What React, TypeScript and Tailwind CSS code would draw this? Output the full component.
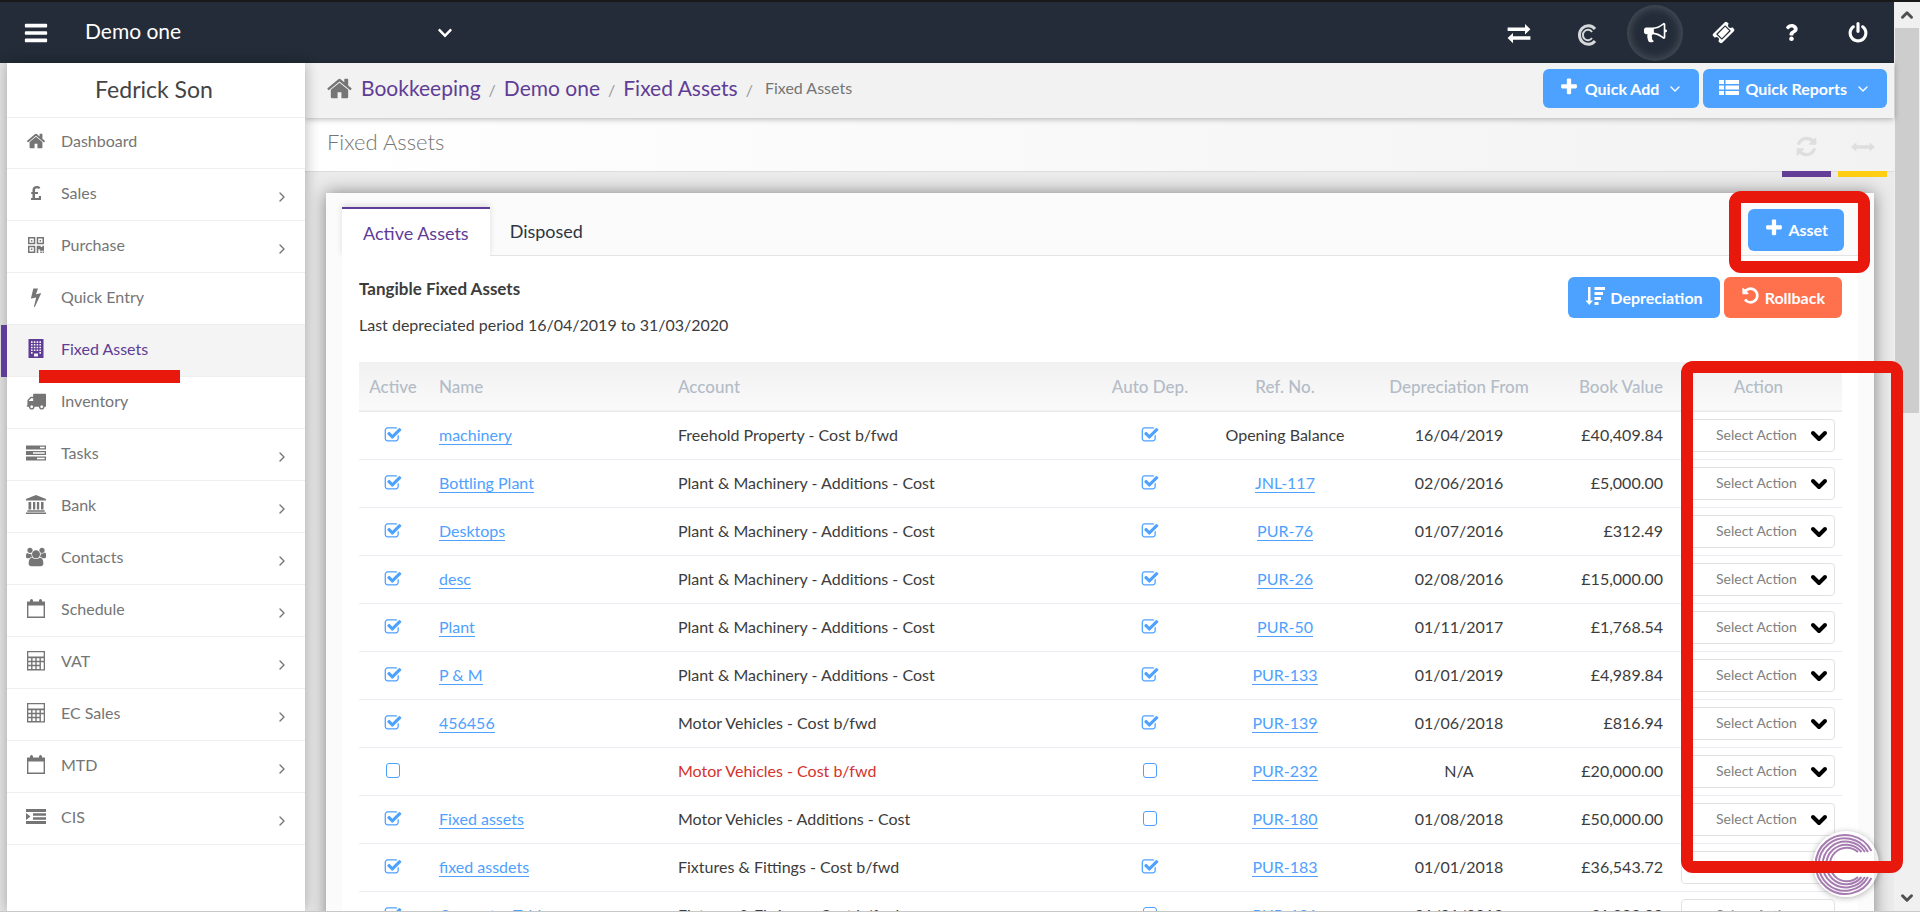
import { FaChevronDown, FaPoundSign, FaQuestion } from "react-icons/fa";
import { ChevronDown, ChevronRight, ChevronUp } from "lucide-react";

const paths = {
  bars: "M1664 1344v128q0 26-19 45t-45 19h-1408q-26 0-45-19t-19-45v-128q0-26 19-45t45-19h1408q26 0 45 19t19 45zm0-512v128q0 26-19 45t-45 19h-1408q-26 0-45-19t-19-45v-128q0-26 19-45t45-19h1408q26 0 45 19t19 45zm0-512v128q0 26-19 45t-45 19h-1408q-26 0-45-19t-19-45v-128q0-26 19-45t45-19h1408q26 0 45 19t19 45z",
  home: "M1472 992v480q0 26-19 45t-45 19h-384v-384h-256v384h-384q-26 0-45-19t-19-45v-480q0-1 .5-3t.5-3l575-474 575 474q1 2 1 6zm223-69l-62 74q-8 9-21 11h-3q-13 0-21-7l-692-577-692 577q-12 8-24 7-13-2-21-11l-62-74q-8-10-7-23.5t11-21.5l719-599q32-26 76-26t76 26l244 204v-195q0-14 9-23t23-9h192q14 0 23 9t9 23v408l219 182q10 8 11 21.5t-7 23.5z",
  plus: "M1600 736v192q0 40-28 68t-68 28h-416v416q0 40-28 68t-68 28h-192q-40 0-68-28t-28-68v-416h-416q-40 0-68-28t-28-68v-192q0-40 28-68t68-28h416v-416q0-40 28-68t68-28h192q40 0 68 28t28 68v416h416q40 0 68 28t28 68z",
  bolt: "M1333 566q18 20 7 44l-540 1157q-13 25-42 25-4 0-14-2-17-5-25.5-19t-4.5-30l197-808-406 101q-4 1-12 1-18 0-31-11-18-15-13-39l201-825q4-14 16-23t28-9h328q19 0 32 12.5t13 29.5q0 8-5 18l-171 463 396-98q8-2 12-2 19 0 34 15z",
  check:
    "M1472 930v318q0 119-84.5 203.5t-203.5 84.5h-832q-119 0-203.5-84.5t-84.5-203.5v-832q0-119 84.5-203.5t203.5-84.5h832q63 0 117 25 15 7 18 23 3 17-9 29l-49 49q-10 10-23 10-3 0-9-2-23-6-45-6h-832q-66 0-113 47t-47 113v832q0 66 47 113t113 47h832q66 0 113-47t47-113v-254q0-13 9-22l64-64q10-10 23-10 6 0 12 3 20 8 20 29zm231-489l-814 814q-24 24-57 24t-57-24l-430-430q-24-24-24-57t24-57l110-110q24-24 57-24t57 24l263 263 647-647q24-24 57-24t57 24l110 110q24 24 24 57t-24 57z",
  bullhorn:
    "M1664 640q53 0 90.5 37.5t37.5 90.5-37.5 90.5-90.5 37.5v384q0 52-38 90t-90 38q-417-347-812-380-58 19-91 66t-31 100.5 40 92.5q-20 33-23 65.5t6 58 33.5 55 48 50 61.5 50.5q-29 58-111.5 83t-168.5 11.5-132-55.5q-7-23-29.5-87.5t-32-94.5-23-89-15-101 3.5-98.5 22-110.5h-122q-66 0-113-47t-47-113v-192q0-66 47-113t113-47h480q435 0 896-384 52 0 90 38t38 90v384zm-128 604v-954q-394 302-768 343v270q377 42 768 341z",
  refresh:
    "M1639 1056q0 5-1 7-64 268-268 434.5t-478 166.5q-146 0-282.5-55t-243.5-157l-129 129q-19 19-45 19t-45-19-19-45v-448q0-26 19-45t45-19h448q26 0 45 19t19 45-19 45l-137 137q71 66 161 102t187 36q134 0 250-65t186-179q11-17 53-117 8-23 30-23h192q13 0 22.5 9.5t9.5 22.5zm25-800v448q0 26-19 45t-45 19h-448q-26 0-45-19t-19-45 19-45l138-138q-148-137-349-137-134 0-250 65t-186 179q-11 17-53 117-8 23-30 23h-199q-13 0-22.5-9.5t-9.5-22.5v-7q65-268 270-434.5t480-166.5q146 0 284 55.5t245 156.5l130-129q19-19 45-19t45 19 19 45z",
  power:
    "M1664 896q0 156-61 298t-164 245-245 164-298 61-298-61-245-164-164-245-61-298q0-182 80.5-343t226.5-270q43-32 95.5-25t83.5 50q32 42 24.5 94.5t-49.5 84.5q-98 74-151.5 181t-53.5 228q0 104 40.5 198.5t109.5 163.5 163.5 109.5 198.5 40.5 198.5-40.5 163.5-109.5 109.5-163.5 40.5-198.5q0-121-53.5-228t-151.5-181q-42-32-49.5-84.5t24.5-94.5q31-43 84-50t95 25q146 109 226.5 270t80.5 343zm-640-768v640q0 52-38 90t-90 38-90-38-38-90v-640q0-52 38-90t90-38 90 38 38 90z",
  undo: "M1664 896q0 156-61 298t-164 245-245 164-298 61q-172 0-327-72.5t-264-204.5q-7-10-6.5-22.5t8.5-20.5l137-138q10-9 25-9 16 2 23 12 73 95 179 147t225 52q104 0 198.5-40.5t163.5-109.5 109.5-163.5 40.5-198.5-40.5-198.5-109.5-163.5-163.5-109.5-198.5-40.5q-98 0-188 35.5t-160 101.5l137 138q31 30 14 69-17 40-59 40h-448q-26 0-45-19t-19-45v-448q0-42 40-59 39-17 69 14l130 129q107-101 244.5-156.5t284.5-55.5q156 0 298 61t245 164 164 245 61 298z",
  users:
    "M529 896q-162 5-265 128h-134q-82 0-138-40.5t-56-118.5q0-353 124-353 6 0 43.5 21t97.5 42.5 119 21.5q67 0 133-23-5 37-5 66 0 159 97 294zm1071 637q0 120-73 189.5t-194 69.5h-874q-121 0-194-69.5t-73-189.5q0-53 3.5-103.5t14-109 26.5-108.5 43-97.5 62-81 85.5-53.5 111.5-20q10 0 43 21.5t73 48 107 48 135 21.5 135-21.5 107-48 73-48 43-21.5q61 0 111.5 20t85.5 53.5 62 81 43 97.5 26.5 108.5 14 109 3.5 103.5zm-1024-1277q0 106-75 181t-181 75-181-75-75-181 75-181 181-75 181 75 75 181zm704 384q0 159-112.5 271.5t-271.5 112.5-271.5-112.5-112.5-271.5 112.5-271.5 271.5-112.5 271.5 112.5 112.5 271.5zm576 225q0 78-56 118.5t-138 40.5h-134q-103-123-265-128 97-135 97-294 0-29-5-66 66 23 133 23 59 0 119-21.5t97.5-42.5 43.5-21q124 0 124 353zm-128-609q0 106-75 181t-181 75-181-75-75-181 75-181 181-75 181 75 75 181z",
  truck:
    "M640 1408q0-52-38-90t-90-38-90 38-38 90 38 90 90 38 90-38 38-90zm-384-512h384v-256h-158q-13 0-22 9l-195 195q-9 9-9 22v30zm1280 512q0-52-38-90t-90-38-90 38-38 90 38 90 90 38 90-38 38-90zm256-1088v1024q0 15-4 26.5t-13.5 18.5-16.5 11.5-23.5 6-22.5 2-25.5 0-22.5-.5q0 106-75 181t-181 75-181-75-75-181h-384q0 106-75 181t-181 75-181-75-75-181h-64q-3 0-22.5.5t-25.5 0-22.5-2-23.5-6-16.5-11.5-13.5-18.5-4-26.5q0-26 19-45t45-19v-320q0-8-.5-35t0-38 2.5-34.5 6.5-37 14-30.5 22.5-30l198-198q19-19 50.5-32t58.5-13h160v-192q0-26 19-45t45-19h1024q26 0 45 19t19 45z",
  ticket:
    "M1024 452l316 316-572 572-316-316zm-211 979l618-618q19-19 19-45t-19-45l-362-362q-18-18-45-18t-45 18l-618 618q-19 19-19 45t19 45l362 362q18 18 45 18t45-18zm889-637l-907 908q-37 37-90.5 37t-90.5-37l-126-126q56-56 56-136t-56-136-136-56-136 56l-125-126q-37-37-37-90.5t37-90.5l907-906q37-37 90.5-37t90.5 37l125 125q-56 56-56 136t56 136 136 56 136-56l126 125q37 37 37 90.5t-37 90.5z",
};

function Glyph({ name, className }: { name: keyof typeof paths; className?: string }) {
  return (
    <svg
      viewBox={name === "users" ? "-64 0 1920 1792" : "0 0 1792 1792"}
      fill="currentColor"
      className={className}
      aria-hidden="true"
    >
      <path d={paths[name]} />
    </svg>
  );
}

// Icons on a 20px grid, mostly plain bars and boxes
function Shape({ d, className = "size-5" }: { d: string; className?: string }) {
  return (
    <svg viewBox="0 0 20 20" fill="currentColor" fillRule="evenodd" className={className} aria-hidden="true">
      <path d={d} />
    </svg>
  );
}

const shapes = {
  qrcode:
    "M2 2h7.300v7.300H2zM3.500 3.500v4.300h4.300V3.500zM4.900 4.900h1.500v1.500H4.900zM10.700 2H18v7.300h-7.300zM12.200 3.500v4.300h4.300V3.500zM13.600 4.900h1.500v1.500h-1.500zM2 10.700h7.300V18H2zM3.500 12.200v4.300h4.300v-4.300zM4.900 13.600h1.500v1.500H4.900zM10.700 10.700h4V12h1.600v-1.300H18v5h-4.200v-1.500h-1.500V18h-1.600zM14.300 16.500h1.500V18h-1.500zM16.600 16.500H18V18h-1.400z",
  building:
    "M2.500 0h15v19h-15zM5 2.300v1.600h1.600V2.300zM7.800 2.300v1.600h1.600V2.300zM10.600 2.300v1.600h1.600V2.300zM13.400 2.300v1.600H15V2.300zM5 5v1.600h1.600V5zM7.800 5v1.600h1.600V5zM10.600 5v1.600h1.600V5zM13.400 5v1.600H15V5zM5 7.700v1.600h1.600V7.700zM7.800 7.700v1.600h1.600V7.700zM10.600 7.700v1.600h1.600V7.700zM13.400 7.700v1.600H15V7.700zM5 10.400V12h1.600v-1.600zM7.800 10.400V12h1.600v-1.600zM10.600 10.400V12h1.600v-1.600zM13.400 10.400V12H15v-1.600zM5 13.100v1.600h1.600v-1.600zM13.400 13.100v1.600H15v-1.600zM8 14.500v3h4v-3z",
  tasks:
    "M0 2.500h20v4H0zM14 3.800v1.400h4.700V3.800zM0 8h20v4H0zM7 9.300v1.400h11.700V9.300zM0 13.500h20v4H0zM11 14.800v1.400h7.700v-1.400z",
  bank: "M10 0l10 4v1.500H0V4zM2.500 7h2.700v7.500H2.500zM7 7h2.300v7.500H7zM10.900 7h2.300v7.500h-2.300zM15 7h2.500v7.500H15zM1.300 15.200h17.400v1.500H1.300zM0 17.500h20V19H0z",
  calendar:
    "M1 2.500h3V1.500a1.500 1.500 0 0 1 3 0v1h6V1.500a1.500 1.500 0 0 1 3 0v1h3V19H1zM2.400 6.500v11.100h15.200V6.500z",
  calculator:
    "M1 0h18v19.500H1zM2.300 1.300v4.200h15.400V1.300zM2.300 7.300v2.500h2.800V7.300zM6.500 7.300v2.500h2.800V7.300zM10.700 7.300v2.500h2.800V7.300zM14.900 7.300v2.500h2.800V7.300zM2.300 11.200v2.500h2.800v-2.500zM6.500 11.200v2.500h2.800v-2.500zM10.700 11.200v2.500h2.800v-2.500zM14.900 11.200v7h2.800v-7zM2.300 15.200v2.800h2.800v-2.800zM6.500 15.200v2.800h2.800v-2.800zM10.700 15.200v2.800h2.800v-2.800z",
  indent: "M0 2h20v3H0zM7 6.200h13v2.600H7zM7 10.200h13v2.600H7zM0 14h20v3H0zM0 6l4.500 3.500L0 13z",
  exchange:
    "M.5 5.500h14.500V2.500l4.500 4.400-4.500 4.400V8.300H.5zM19.500 12.800H5V10L.5 14.200 5 18.500v-2.900h14.500z",
  arrowsH: "M0 10l4.500-4v2.500h11V6L20 10l-4.500 4v-2.500h-11V14z",
  list: "M0 3h5v4H0zM6.500 3H20v4H6.500zM0 8.500h5v4H0zM6.500 8.500H20v4H6.500zM0 14h5v4H0zM6.500 14H20v4H6.500z",
  sortDesc:
    "M3 1h2.500v13.500H8L4.200 19 .5 14.500H3zM9.500 1H20v3H9.500zM9.500 6H18v3H9.500zM9.500 11H16v3H9.500zM9.500 16h4v3h-4z",
};

const menu = [
  { label: "Dashboard", icon: <Glyph name="home" className="size-5" /> },
  { label: "Sales", icon: <FaPoundSign className="size-4" />, more: true },
  { label: "Purchase", icon: <Shape d={shapes.qrcode} />, more: true },
  { label: "Quick Entry", icon: <Glyph name="bolt" className="size-5" /> },
  { label: "Fixed Assets", icon: <Shape d={shapes.building} />, active: true },
  { label: "Inventory", icon: <Glyph name="truck" className="size-5" /> },
  { label: "Tasks", icon: <Shape d={shapes.tasks} />, more: true },
  { label: "Bank", icon: <Shape d={shapes.bank} />, more: true },
  { label: "Contacts", icon: <Glyph name="users" className="size-5" />, more: true },
  { label: "Schedule", icon: <Shape d={shapes.calendar} />, more: true },
  { label: "VAT", icon: <Shape d={shapes.calculator} />, more: true },
  { label: "EC Sales", icon: <Shape d={shapes.calculator} />, more: true },
  { label: "MTD", icon: <Shape d={shapes.calendar} />, more: true },
  { label: "CIS", icon: <Shape d={shapes.indent} />, more: true },
];

const crumbs = ["Bookkeeping", "Demo one", "Fixed Assets"];

const additions = "Plant & Machinery - Additions - Cost";

const assets = [
  { active: true, name: "machinery", account: "Freehold Property - Cost b/fwd", auto: true, ref: "", from: "16/04/2019", value: "£40,409.84" },
  { active: true, name: "Bottling Plant", account: additions, auto: true, ref: "JNL-117", from: "02/06/2016", value: "£5,000.00" },
  { active: true, name: "Desktops", account: additions, auto: true, ref: "PUR-76", from: "01/07/2016", value: "£312.49" },
  { active: true, name: "desc", account: additions, auto: true, ref: "PUR-26", from: "02/08/2016", value: "£15,000.00" },
  { active: true, name: "Plant", account: additions, auto: true, ref: "PUR-50", from: "01/11/2017", value: "£1,768.54" },
  { active: true, name: "P & M", account: additions, auto: true, ref: "PUR-133", from: "01/01/2019", value: "£4,989.84" },
  { active: true, name: "456456", account: "Motor Vehicles - Cost b/fwd", auto: true, ref: "PUR-139", from: "01/06/2018", value: "£816.94" },
  { active: false, name: "", account: "Motor Vehicles - Cost b/fwd", auto: false, ref: "PUR-232", from: "N/A", value: "£20,000.00" },
  { active: true, name: "Fixed assets", account: "Motor Vehicles - Additions - Cost", auto: false, ref: "PUR-180", from: "01/08/2018", value: "£50,000.00" },
  { active: true, name: "fixed assdets", account: "Fixtures & Fittings - Cost b/fwd", auto: true, ref: "PUR-183", from: "01/01/2018", value: "£36,543.72" },
  { active: true, name: "Computer Table", account: "Fixtures & Fittings - Cost b/fwd", auto: false, ref: "PUR-181", from: "01/01/2018", value: "£1,200.00" },
];

function Check({ label, checked }: { label: string; checked: boolean }) {
  return (
    <label className="relative inline-flex size-[18px] align-middle text-[#4da1ff]">
      <input type="checkbox" defaultChecked={checked} aria-label={label} className="peer size-full appearance-none" />
      <Glyph name="check" className="pointer-events-none absolute inset-0 hidden peer-checked:block" />
      <span className="pointer-events-none absolute inset-x-[2px] top-px h-[15px] rounded-[3px] border border-current peer-checked:hidden" />
    </label>
  );
}

function Topbar() {
  return (
    <header className="flex items-center h-[63px] shrink-0 border-t-2 border-[#191919] bg-[#232c38] pl-[23px] pr-[25px] text-white">
      <button aria-label="Menu">
        <Glyph name="bars" className="size-[26px]" />
      </button>
      <button className="flex items-center justify-between w-[368px] ml-9 pb-1 text-[21px]">
        Demo one
        <FaChevronDown className="size-4 mt-1" />
      </button>
      <nav className="flex items-center ml-auto">
        <button className="flex justify-center w-[68px]" aria-label="Switch">
          <Shape d={shapes.exchange} className="size-6" />
        </button>
        <button className="flex justify-center w-[68px] pt-1" aria-label="Capium">
          <svg viewBox="0 0 20 22" className="w-5 h-[22px]" fill="none" stroke="#d5d7da">
            <path d="M18 5A8.800 9.300 0 1 0 18 17" strokeWidth="3" />
            <path d="M15 8A5 5.200 0 1 0 15 14" strokeWidth="2" />
          </svg>
        </button>
        <button
          className="flex items-center justify-center size-14 mx-[6px] rounded-full shadow-[inset_0_0_10px_2px_rgba(255,255,255,0.18)]"
          aria-label="Announcements"
        >
          <Glyph name="bullhorn" className="size-[23px]" />
        </button>
        <button className="flex justify-center w-[68px]" aria-label="Tickets">
          <Glyph name="ticket" className="size-[23px]" />
        </button>
        <button className="flex justify-center w-[68px]" aria-label="Help">
          <FaQuestion className="size-[17px]" />
        </button>
        <button className="flex justify-end w-[44px]" aria-label="Log out">
          <Glyph name="power" className="size-[22px]" />
        </button>
      </nav>
    </header>
  );
}

function Sidebar() {
  return (
    <aside className="relative z-10 w-[298px] ml-[7px] shrink-0 bg-white shadow-[0_0_14px_rgba(0,0,0,0.3)]">
      <h2 className="h-[55px] pt-2 pr-1 text-center text-[23px] leading-9 text-[#444] border-b border-[#eee]">Fedrick Son</h2>
      <ul className="-mt-px">
        {menu.map((item) => (
          <li key={item.label} className="relative">
            {item.active && <span className="absolute -left-[6px] inset-y-0 w-[6px] bg-[#5f3d96]" />}
            <a
              href="#"
              className={
                "flex items-center h-[52px] pl-[19px] pr-[15px] pb-1 border-b border-[#eee] " +
                (item.active ? "bg-[#f4f4f4] text-[#5f3d96]" : "text-[#757575]")
              }
            >
              <span className="flex justify-center w-5 mr-[15px]">{item.icon}</span>
              {item.label}
              {item.more && <ChevronRight className="size-4 ml-auto mt-2" />}
            </a>
            {item.active && <span className="absolute left-8 -bottom-[6px] z-10 w-[141px] h-[13px] bg-[#e8180c]" />}
          </li>
        ))}
      </ul>
    </aside>
  );
}

function AssetTable() {
  return (
    <table className="w-full table-fixed text-[#3c3c3c]">
      <thead>
        <tr className="h-[49px] bg-gradient-to-b from-[#f1f1f1] to-[#fafafa] border-b border-[#eaeaea] text-[17px] text-[#b3bcc7]">
          <th className="w-[68px] font-medium">Active</th>
          <th className="w-[239px] px-3 font-medium text-left">Name</th>
          <th className="px-3 font-medium text-left">Account</th>
          <th className="w-[106px] font-medium">Auto Dep.</th>
          <th className="w-[164px] font-medium">Ref. No.</th>
          <th className="w-[184px] font-medium">Depreciation From</th>
          <th className="w-[124px] px-3 font-medium text-right">Book Value</th>
          <th className="w-[167px] font-medium">Action</th>
        </tr>
      </thead>
      <tbody>
        {assets.map((a, index) => (
          <tr key={index} className="h-12 border-b border-[#e9edf2]">
            <td className="text-center pb-1">
              <Check label={"Active " + a.name} checked={a.active} />
            </td>
            <td className="px-3">
              <a href="#" className="border-b border-current text-[#4da1ff]">
                {a.name}
              </a>
            </td>
            <td className={a.name ? "px-3" : "px-3 text-[#d4322c]"}>{a.account}</td>
            <td className="text-center pb-1">
              <Check label={"Auto depreciation " + a.name} checked={a.auto} />
            </td>
            <td className="text-center">
              {a.ref ? (
                <a href="#" className="border-b border-current text-[#4da1ff]">
                  {a.ref}
                </a>
              ) : (
                "Opening Balance"
              )}
            </td>
            <td className="text-center">{a.from}</td>
            <td className="px-3 text-right">{a.value}</td>
            <td className="pl-[6px] pr-[7px]">
              <div className="relative">
                <select
                  aria-label={"Action for " + a.name}
                  className="block w-full h-[33px] pl-[34px] appearance-none rounded border border-[#e2e2e2] bg-white text-sm text-[#808080]"
                >
                  <option>Select Action</option>
                </select>
                <ChevronDown className="pointer-events-none absolute right-[4px] top-[5px] size-6 text-black" strokeWidth={4} />
              </div>
            </td>
          </tr>
        ))}
      </tbody>
    </table>
  );
}

function ChatBadge() {
  return (
    <button
      aria-label="Chat"
      className="absolute right-[15px] bottom-[14px] flex items-center justify-center size-[66px] rounded-full bg-white/70 shadow-[0_1px_6px_rgba(0,0,0,0.3)]"
    >
      <svg viewBox="0 0 66 66" className="size-full" fill="none" stroke="#a67bb0" strokeWidth="2">
        <path d="M58.400 20A29.500 29.500 0 1 0 58.400 47" />
        <path d="M55 21A26.200 26.200 0 1 0 55 46" />
        <path d="M52 21A23 23 0 1 0 52 46" />
        <path d="M48.500 21A19.800 19.800 0 1 0 48.500 46" />
        <path d="M45 21A16.800 16.800 0 1 0 45 46" />
      </svg>
    </button>
  );
}

function Scrollbar() {
  return (
    <div className="flex flex-col items-center w-[26px] shrink-0 border-t-2 border-[#191919] bg-[#f0f0f0] text-[#505050]">
      <ChevronUp className="size-[18px] my-1" strokeWidth={4} />
      <div className="w-6 h-[385px] bg-[#cdcdcd]" />
      <ChevronDown className="size-[18px] mt-auto mb-1" strokeWidth={4} />
    </div>
  );
}

const button = "flex items-center rounded-md font-bold text-white";

export default function App() {
  return (
    <div className="relative flex h-screen overflow-hidden border-b border-[#c8c8c8] bg-[#e6e6e6] font-[Lato,sans-serif] text-base">
      <div className="relative flex flex-col flex-1 min-w-0">
        <Topbar />
        <div className="flex flex-1 min-h-0">
          <Sidebar />
          <main className="flex flex-col flex-1 min-w-0 bg-[#ebebeb]">
            <div className="relative flex items-center h-[55px] shrink-0 pl-[22px] pr-[7px] pb-1 bg-[#f2f2f2] shadow-[0_1px_6px_rgba(0,0,0,0.3)]">
              <Glyph name="home" className="size-[27px] mr-2 -ml-px text-[#757575]" />
              <nav className="flex items-center pb-[2px] text-[21px] text-[#5f3d96]">
                {crumbs.map((c) => (
                  <span key={c}>
                    <a href="#">{c}</a>
                    <span className="mx-2 text-base text-[#999]">/</span>
                  </span>
                ))}
                <span className="ml-1 text-base text-[#757575]">Fixed Assets</span>
              </nav>
              <div className="flex gap-1 ml-auto">
                <button className={button + " h-[39px] px-4 bg-[#4da1ff]"}>
                  <Glyph name="plus" className="size-5 mr-[6px] mb-1" />
                  Quick Add
                  <ChevronDown className="size-4 ml-2" />
                </button>
                <button className={button + " h-[39px] px-4 bg-[#4da1ff]"}>
                  <Shape d={shapes.list} className="size-5 mr-[6px] mb-1" />
                  Quick Reports
                  <ChevronDown className="size-4 ml-2" />
                </button>
              </div>
            </div>
            <div className="flex justify-between h-[54px] shrink-0 pl-[22px] pr-[7px] border-b border-[#ddd] bg-gradient-to-r from-white to-[#f2f2f2]">
              <h1 className="pt-2 text-[22px] leading-8 font-light text-[#757575]">Fixed Assets</h1>
              <div className="flex gap-[7px] text-[#dedede]">
                <button aria-label="Refresh" className="flex items-center justify-center w-[49px] h-[59px] pt-1 border-b-6 border-[#643f97]">
                  <Glyph name="refresh" className="size-[23px]" />
                </button>
                <button aria-label="Expand" className="flex items-center justify-center w-[49px] h-[59px] pt-1 border-b-6 border-[#ffcd12]">
                  <Shape d={shapes.arrowsH} className="size-6" />
                </button>
              </div>
            </div>
            <section className="flex flex-col flex-1 mt-[21px] ml-[21px] mr-5 px-4 pt-[14px] bg-[#fbfbfb] shadow-[0_0_16px_rgba(0,0,0,0.45)]">
              <div className="flex border-b border-[#e4e4e4]">
                <button className="h-[49px] -mb-px px-[21px] border-t-2 border-[#5f3d96] bg-white text-lg text-[#5f3d96] shadow-[0_-2px_6px_rgba(0,0,0,0.12)]">
                  Active Assets
                </button>
                <button className="px-5 text-lg text-[#2c3641]">Disposed</button>
                <button className={button + " h-[42px] mt-[2px] mr-[14px] ml-auto px-4 bg-[#4da1ff]"}>
                  <Glyph name="plus" className="size-5 mr-1 mb-1" />
                  Asset
                </button>
              </div>
              <div className="flex-1 bg-white pl-[17px] pr-4">
                <div className="flex justify-between h-[106px] pt-[21px]">
                  <div className="leading-6 text-[#3c3c3c]">
                    <h3 className="font-bold text-[17px]">Tangible Fixed Assets</h3>
                    <p className="mt-3">Last depreciated period 16/04/2019 to 31/03/2020</p>
                  </div>
                  <div className="flex items-start gap-1">
                    <button className={button + " h-[41px] px-[17px] bg-[#4da1ff]"}>
                      <Shape d={shapes.sortDesc} className="size-5 mr-[5px] mb-1" />
                      Depreciation
                    </button>
                    <button className={button + " h-[41px] px-[17px] bg-[#ff704d]"}>
                      <Glyph name="undo" className="size-[19px] mr-[5px] mb-1" />
                      Rollback
                    </button>
                  </div>
                </div>
                <AssetTable />
              </div>
            </section>
          </main>
        </div>
        <ChatBadge />
      </div>
      <Scrollbar />
      {/* callouts */}
      <div className="pointer-events-none absolute top-[191px] right-[50px] w-[141px] h-[82px] rounded-xl border-12 border-[#e8180c]" />
      <div className="pointer-events-none absolute top-[361px] right-[17px] w-[222px] h-[512px] rounded-xl border-12 border-[#e8180c]" />
    </div>
  );
}
